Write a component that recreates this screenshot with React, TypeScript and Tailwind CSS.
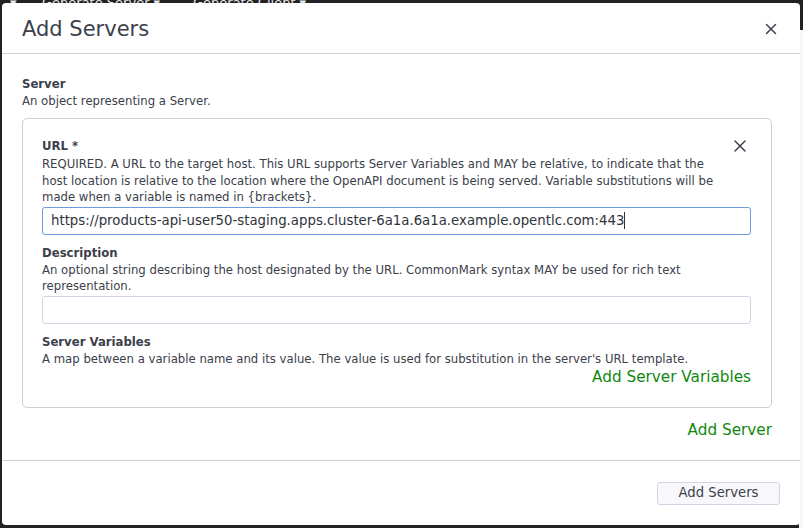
import { X } from "lucide-react";

const font = { fontFamily: '"DejaVu Sans", sans-serif' };

const App = () => {
    return (
        <div className="relative w-[803px] h-[528px] overflow-hidden bg-[#222222]" style={font}>
            {/* page behind the modal */}
            <div className="absolute right-0 top-[30px] w-[4px] h-[498px] bg-[#f6f7f9]" />
            <div className="absolute left-0 top-[-7px] flex text-[13px] text-[#e5e5e5] whitespace-nowrap">
                <span className="w-[42px] pl-[10px]">▾</span>
                <span className="w-[151px]">Generate Server ▾</span>
                <span>Generate Client ▾</span>
            </div>

            <div className="absolute left-[2px] top-[3px] w-[798px] h-[522px] bg-white rounded-[4px] flex flex-col text-[#3c404b]">
                <div className="h-[51px] flex items-center justify-between pl-[20px] pr-[20px] border-b border-[#d2d2d2] shrink-0">
                    <h1 className="text-[21px] leading-none pt-[3px]">Add Servers</h1>
                    <X size={18} strokeWidth={2} className="text-[#3c404b] mt-[2px]" />
                </div>

                <div className="flex-1 pl-[20px] pr-[28px] pt-[22px]">
                    <div className="text-[11.7px] font-bold leading-[17px]">Server</div>
                    <div className="text-[11.7px] leading-[17px]">An object representing a Server.</div>

                    <div className="mt-[8px] border border-[#cfcfcf] rounded-[5px] pl-[19px] pr-[20px] pt-[19px] pb-[20px]">
                        <div className="flex items-start justify-between">
                            <div className="text-[11.7px] font-bold leading-[17px]">URL *</div>
                            <X size={20} strokeWidth={1.8} className="mt-[-2px] mr-[1px]" />
                        </div>
                        <div className="max-w-[680px] text-[11.7px] leading-[16.5px]">
                            REQUIRED. A URL to the target host. This URL supports Server Variables and MAY be relative, to indicate that the host location is relative to the location where the OpenAPI document is being served. Variable substitutions will be made when a variable is named in {"{brackets}"}.
                        </div>
                        <div className="mt-[1px] h-[28px] border border-[#6d9be0] rounded-[3px] flex items-center px-[8px] text-[13.3px] text-[#2f333c]">
                            https://products-api-user50-staging.apps.cluster-6a1a.6a1a.example.opentlc.com:443
                            <span className="inline-block w-px h-[17px] bg-[#2f333c]" />
                        </div>

                        <div className="mt-[10px] text-[11.7px] font-bold leading-[17px]">Description</div>
                        <div className="text-[11.7px] leading-[16.5px]">
                            An optional string describing the host designated by the URL. CommonMark syntax MAY be used for rich text representation.
                        </div>
                        <div className="mt-[1px] h-[28px] border border-[#cfd5e2] rounded-[3px]" />

                        <div className="mt-[10px] text-[11.7px] font-bold leading-[17px]">Server Variables</div>
                        <div className="text-[11.7px] leading-[16.5px]">
                            A map between a variable name and its value. The value is used for substitution in the server's URL template.
                        </div>
                        <div className="text-right text-[15.25px] leading-[20px] text-[#12870f]">Add Server Variables</div>
                    </div>

                    <div className="mt-[12px] text-right text-[15.25px] leading-[20px] text-[#12870f]">Add Server</div>
                </div>

                <div className="h-[65px] border-t border-[#d2d2d2] flex items-center justify-end pr-[20px] shrink-0">
                    <button className="w-[123px] h-[23px] border border-[#cfd5e2] rounded-[3px] bg-[#f8f8fa] text-[13.2px] leading-none text-[#3c404b]">
                        Add Servers
                    </button>
                </div>
            </div>
        </div>
    );
};

export default App;
